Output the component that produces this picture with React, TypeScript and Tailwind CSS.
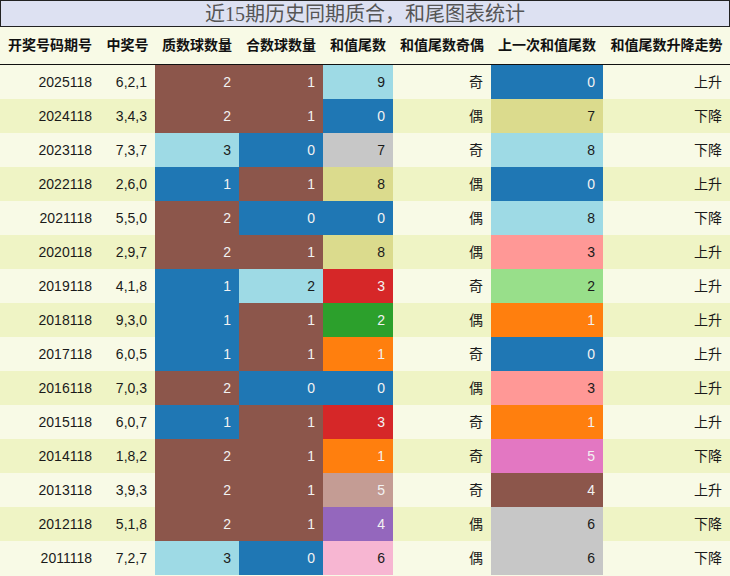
import React from "react";

type Cell = { v: string; bg: string; light?: boolean };

const BLUE = "#1f77b4";
const BROWN = "#8c564b";
const CYAN_L = "#9edae5";
const OLIVE_L = "#dbdb8d";
const GRAY_L = "#c7c7c7";
const RED = "#d62728";
const GREEN = "#2ca02c";
const ORANGE = "#ff7f0e";
const PURPLE = "#9467bd";
const ROSE = "#c49c94";
const PINK_L = "#f7b6d2";
const SALMON = "#ff9896";
const GREEN_L = "#98df8a";
const PINK = "#e377c2";

// dark backgrounds get white text
const darkBgs = [BLUE, BROWN, RED, GREEN, ORANGE, PURPLE, ROSE, PINK];

type Row = {
  issue: string;
  nums: string;
  prime: [string, string];
  comp: [string, string];
  tail: [string, string];
  parity: string;
  prev: [string, string];
  trend: string;
};

const rows: Row[] = [
  { issue: "2025118", nums: "6,2,1", prime: ["2", BROWN], comp: ["1", BROWN], tail: ["9", CYAN_L], parity: "奇", prev: ["0", BLUE], trend: "上升" },
  { issue: "2024118", nums: "3,4,3", prime: ["2", BROWN], comp: ["1", BROWN], tail: ["0", BLUE], parity: "偶", prev: ["7", OLIVE_L], trend: "下降" },
  { issue: "2023118", nums: "7,3,7", prime: ["3", CYAN_L], comp: ["0", BLUE], tail: ["7", GRAY_L], parity: "奇", prev: ["8", CYAN_L], trend: "下降" },
  { issue: "2022118", nums: "2,6,0", prime: ["1", BLUE], comp: ["1", BROWN], tail: ["8", OLIVE_L], parity: "偶", prev: ["0", BLUE], trend: "上升" },
  { issue: "2021118", nums: "5,5,0", prime: ["2", BROWN], comp: ["0", BLUE], tail: ["0", BLUE], parity: "偶", prev: ["8", CYAN_L], trend: "下降" },
  { issue: "2020118", nums: "2,9,7", prime: ["2", BROWN], comp: ["1", BROWN], tail: ["8", OLIVE_L], parity: "偶", prev: ["3", SALMON], trend: "上升" },
  { issue: "2019118", nums: "4,1,8", prime: ["1", BLUE], comp: ["2", CYAN_L], tail: ["3", RED], parity: "奇", prev: ["2", GREEN_L], trend: "上升" },
  { issue: "2018118", nums: "9,3,0", prime: ["1", BLUE], comp: ["1", BROWN], tail: ["2", GREEN], parity: "偶", prev: ["1", ORANGE], trend: "上升" },
  { issue: "2017118", nums: "6,0,5", prime: ["1", BLUE], comp: ["1", BROWN], tail: ["1", ORANGE], parity: "奇", prev: ["0", BLUE], trend: "上升" },
  { issue: "2016118", nums: "7,0,3", prime: ["2", BROWN], comp: ["0", BLUE], tail: ["0", BLUE], parity: "偶", prev: ["3", SALMON], trend: "上升" },
  { issue: "2015118", nums: "6,0,7", prime: ["1", BLUE], comp: ["1", BROWN], tail: ["3", RED], parity: "奇", prev: ["1", ORANGE], trend: "上升" },
  { issue: "2014118", nums: "1,8,2", prime: ["2", BROWN], comp: ["1", BROWN], tail: ["1", ORANGE], parity: "奇", prev: ["5", PINK], trend: "下降" },
  { issue: "2013118", nums: "3,9,3", prime: ["2", BROWN], comp: ["1", BROWN], tail: ["5", ROSE], parity: "奇", prev: ["4", BROWN], trend: "上升" },
  { issue: "2012118", nums: "5,1,8", prime: ["2", BROWN], comp: ["1", BROWN], tail: ["4", PURPLE], parity: "偶", prev: ["6", GRAY_L], trend: "下降" },
  { issue: "2011118", nums: "7,2,7", prime: ["3", CYAN_L], comp: ["0", BLUE], tail: ["6", PINK_L], parity: "偶", prev: ["6", GRAY_L], trend: "下降" },
];

const headers = ["开奖号码期号", "中奖号", "质数球数量", "合数球数量", "和值尾数", "和值尾数奇偶", "上一次和值尾数", "和值尾数升降走势"];

const cols = "grid grid-cols-[100px_55px_84px_84px_70px_98px_112px_127px]";

function Colored({ c }: { c: [string, string] }) {
  const dark = darkBgs.includes(c[1]);
  return (
    <div
      className={dark ? "flex items-center justify-end pr-2 text-[#f2f2f2]" : "flex items-center justify-end pr-2 text-[#1a1a1a]"}
      style={{ backgroundColor: c[1] }}
    >
      {c[0]}
    </div>
  );
}

export default function App() {
  return (
    <div
      className="w-[730px] h-[576px] bg-[#f8fae6] overflow-hidden"
      style={{ fontFamily: '"Liberation Sans", "Noto Sans CJK SC", sans-serif' }}
    >
      <div
        className="h-[27px] border border-[#222] bg-[#dde1f2] flex items-center justify-center text-[20px] text-[#555] leading-none"
        style={{ fontFamily: '"Liberation Serif", "Noto Sans CJK SC", serif' }}
      >
        近15期历史同期质合，和尾图表统计
      </div>
      <div className={`${cols} h-[38px] border-b border-[#111] text-[14px] font-bold text-[#111]`}>
        {headers.map((h) => (
          <div key={h} className="flex items-center justify-center whitespace-nowrap">
            {h}
          </div>
        ))}
      </div>
      {rows.map((r, i) => (
        <div
          key={r.issue}
          className={`${cols} h-[34px] text-[14px] text-[#1a1a1a] ${i % 2 === 0 ? "bg-[#f8fae6]" : "bg-[#eff4c5]"}`}
        >
          <div className="flex items-center justify-end pr-2">{r.issue}</div>
          <div className="flex items-center justify-end pr-2">{r.nums}</div>
          <Colored c={r.prime} />
          <Colored c={r.comp} />
          <Colored c={r.tail} />
          <div className="flex items-center justify-end pr-2">{r.parity}</div>
          <Colored c={r.prev} />
          <div className="flex items-center justify-end pr-2">{r.trend}</div>
        </div>
      ))}
    </div>
  );
}
